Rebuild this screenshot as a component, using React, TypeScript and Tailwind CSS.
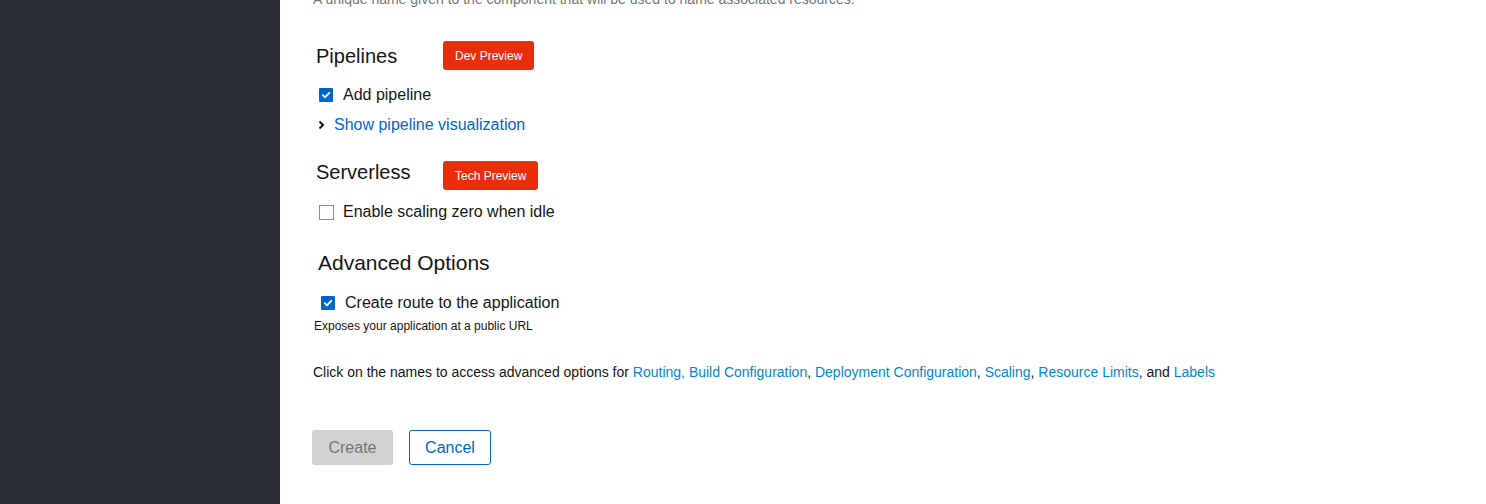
import React from 'react';

const font = { fontFamily: '"Liberation Sans", Arial, sans-serif' };

function Badge({ label }: { label: string }) {
  return (
    <span className="inline-flex items-center justify-center h-[29px] px-[12px] rounded-[3px] bg-[#ea2d0b] text-white text-[12px]">
      {label}
    </span>
  );
}

function Checkbox({ checked }: { checked: boolean }) {
  if (checked) {
    return (
      <span className="flex items-center justify-center w-[14px] h-[14px] bg-[#0066cc] rounded-[1px]">
        <svg width="10" height="10" viewBox="0 0 10 10" fill="none">
          <path d="M1.8 5.2 L4 7.3 L8.3 2.8" stroke="white" strokeWidth="1.8" strokeLinecap="round" strokeLinejoin="round" />
        </svg>
      </span>
    );
  }
  return <span className="block w-[15px] h-[15px] border border-[#8a8d90] bg-white" />;
}

function Link({ children }: { children: React.ReactNode }) {
  return <a className="text-[#0088ce] cursor-pointer">{children}</a>;
}

export default function App() {
  return (
    <div className="flex w-[1486px] h-[504px] overflow-hidden bg-white" style={font}>
      <aside className="w-[280px] shrink-0 bg-[#282d33]" />
      <main className="flex-1 pl-[33px] pt-0">
        <p className="text-[14px] leading-[14px] text-[#737679] -mt-[8px] h-[6px] overflow-visible">
          A unique name given to the component that will be used to name associated resources.
        </p>

        <section className="mt-[43px] pl-[3px]">
          <div className="flex items-center h-[29px]">
            <h2 className="w-[127px] text-[20px] text-[#151515]">Pipelines</h2>
            <Badge label="Dev Preview" />
          </div>
          <label className="flex items-center gap-[10px] mt-[16px] ml-[3px] h-[18px] text-[16px] text-[#151515]">
            <Checkbox checked />
            Add pipeline
          </label>
          <div className="flex items-center gap-[9px] mt-[12px] ml-[2px] h-[18px] text-[16px]">
            <svg width="7" height="10" viewBox="0 0 7 10">
              <path d="M1.5 1.5 L5 5 L1.5 8.5" stroke="#151515" strokeWidth="2" fill="none" />
            </svg>
            <span className="text-[#0066cc]">Show pipeline visualization</span>
          </div>
        </section>

        <section className="mt-[27px] pl-[3px]">
          <div className="flex items-center h-[29px]">
            <h2 className="w-[127px] text-[20px] text-[#151515] -mt-[8px]">Serverless</h2>
            <Badge label="Tech Preview" />
          </div>
          <label className="flex items-center gap-[9px] mt-[13px] ml-[3px] h-[18px] text-[16px] text-[#151515]">
            <Checkbox checked={false} />
            Enable scaling zero when idle
          </label>
        </section>

        <section className="mt-[29px] pl-[5px]">
          <h2 className="text-[21px] leading-[26px] text-[#151515]">Advanced Options</h2>
          <label className="flex items-center gap-[10px] mt-[18px] ml-[3px] h-[18px] text-[16px] text-[#151515]">
            <Checkbox checked />
            Create route to the application
          </label>
        </section>
        <p className="mt-[7px] ml-[1px] text-[12px] leading-[14px] text-[#151515]">Exposes your application at a public URL</p>

        <p className="mt-[31px] text-[14px] leading-[16px] text-[#151515]">
          Click on the names to access advanced options for <Link>Routing, Build Configuration</Link>,{' '}
          <Link>Deployment Configuration</Link>, <Link>Scaling</Link>, <Link>Resource Limits</Link>, and{' '}
          <Link>Labels</Link>
        </p>

        <div className="flex gap-[16px] mt-[50px] -ml-[1px]">
          <button className="w-[81px] h-[35px] rounded-[3px] bg-[#d2d2d2] text-[16px] text-[#737679]">Create</button>
          <button className="w-[82px] h-[35px] rounded-[3px] border border-[#0066cc] bg-white text-[16px] text-[#0066cc]">
            Cancel
          </button>
        </div>
      </main>
    </div>
  );
}
